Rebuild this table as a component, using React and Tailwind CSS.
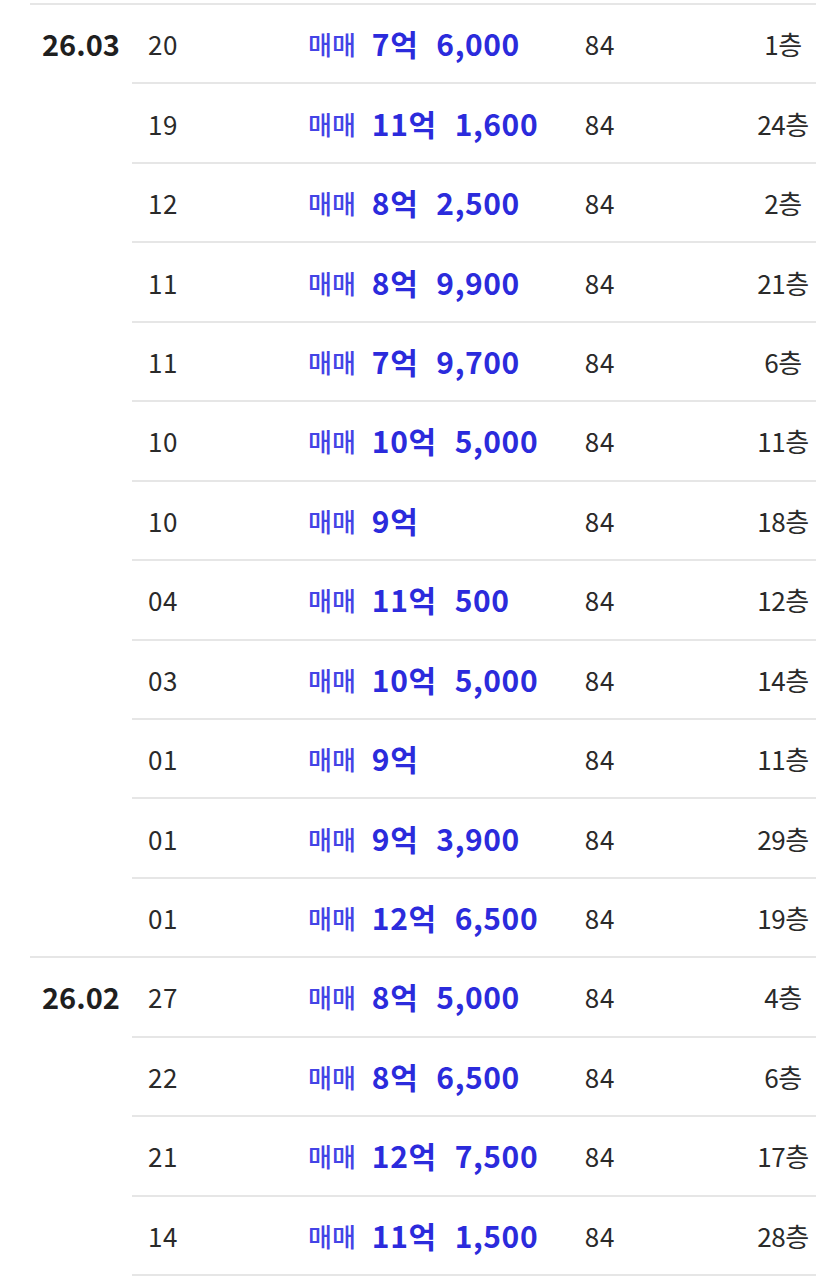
import React from "react";

const groups = [
  {
    date: "26.03",
    rows: [
      ["20", "7억", "6,000", "1층"],
      ["19", "11억", "1,600", "24층"],
      ["12", "8억", "2,500", "2층"],
      ["11", "8억", "9,900", "21층"],
      ["11", "7억", "9,700", "6층"],
      ["10", "10억", "5,000", "11층"],
      ["10", "9억", "", "18층"],
      ["04", "11억", "500", "12층"],
      ["03", "10억", "5,000", "14층"],
      ["01", "9억", "", "11층"],
      ["01", "9억", "3,900", "29층"],
      ["01", "12억", "6,500", "19층"],
    ],
  },
  {
    date: "26.02",
    rows: [
      ["27", "8억", "5,000", "4층"],
      ["22", "8억", "6,500", "6층"],
      ["21", "12억", "7,500", "17층"],
      ["14", "11억", "1,500", "28층"],
    ],
  },
];

export default function App() {
  return (
    <div
      className="bg-white w-[827px] h-[1276px] overflow-hidden pt-[3px]"
      style={{ fontFamily: '"Noto Sans CJK KR", "Noto Sans", sans-serif' }}
    >
      <div className="ml-[30px] w-[786px]">
        {groups.map((g, gi) => (
          <div key={g.date} className="flex">
            <div className="w-[102px] border-t-2 border-[#e6e6e6]">
              <div className="h-[77.44px] flex items-center pl-[12px] text-[29px] font-bold text-[#1f1f1f]">
                {g.date}
              </div>
            </div>
            <div
              className={
                gi === groups.length - 1
                  ? "flex-1 border-b-2 border-[#e6e6e6]"
                  : "flex-1"
              }
            >
              {g.rows.map((r, i) => (
                <div
                  key={i}
                  className="h-[79.44px] border-t-2 border-[#e6e6e6] flex items-center"
                >
                  <div className="w-[176px] pl-[16px] text-[26px] tracking-[0.5px] text-[#2a2a2a]">
                    {r[0]}
                  </div>
                  <div className="w-[262px] flex items-center text-[#2b2bdc] whitespace-nowrap">
                    <span className="text-[26px] font-medium text-[#4444e6] mr-[16px]">
                      매매
                    </span>
                    <span className="text-[30px] font-bold tracking-[0.6px]">
                      {r[1]}
                    </span>
                    {r[2] ? (
                      <span className="text-[30px] font-bold ml-[18px] tracking-[0.6px]">
                        {r[2]}
                      </span>
                    ) : null}
                  </div>
                  <div className="w-[60px] text-center text-[26px] tracking-[0.8px] text-[#2a2a2a]">
                    84
                  </div>
                  <div className="w-[120px]" />
                  <div className="w-[66px] text-center text-[26px] text-[#2a2a2a] whitespace-nowrap tracking-[-0.5px]">
                    {r[3]}
                  </div>
                </div>
              ))}
            </div>
          </div>
        ))}
      </div>
    </div>
  );
}
